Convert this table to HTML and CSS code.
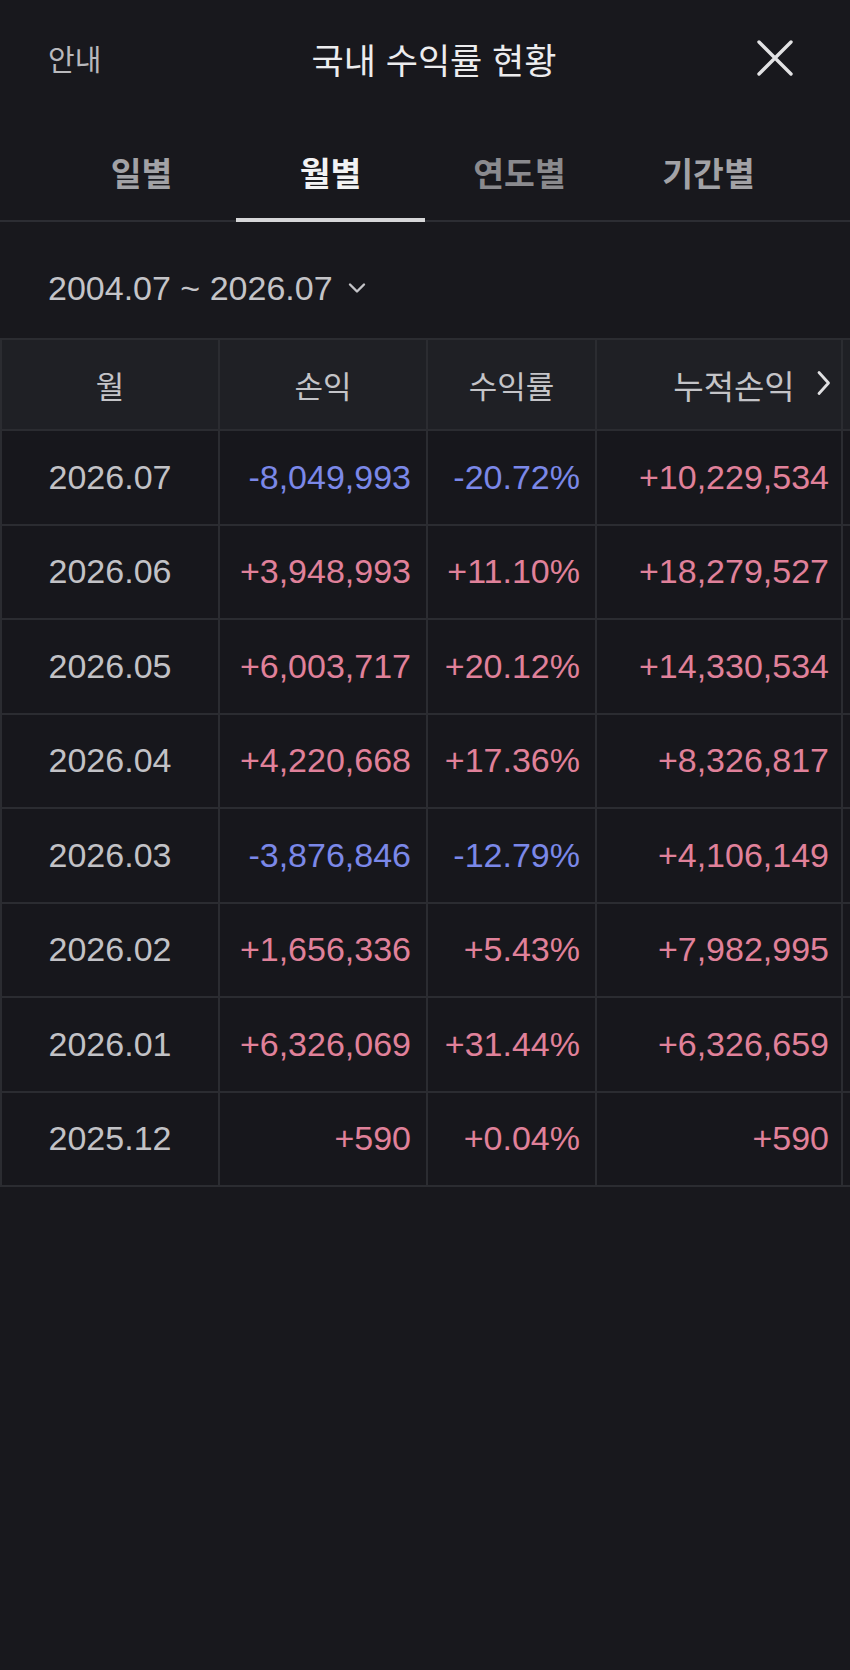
FILE: index.html
```html
<!DOCTYPE html>
<html lang="ko">
	<head>
		<meta charset="utf-8" />
		<title>국내 수익률 현황</title>
		<link rel="stylesheet" href="styles.css">
	</head>

	<body>
		<div class="top">
			<span class="guide">안내</span>
			<h1 class="title">국내 수익률 현황</h1>
			<span class="close">
				<svg width="38" height="38" viewBox="0 0 38 38"><path d="M3 3 L35 35 M35 3 L3 35" stroke="#e2e2e4" stroke-width="3.4" stroke-linecap="round" fill="none" /></svg>
			</span>
		</div>

		<div class="tabs">
			<span class="tab">일별</span>
			<span class="tab on">월별</span>
			<span class="tab dim">연도별</span>
			<span class="tab">기간별</span>
		</div>

		<div class="range">
			2004.07 ~ 2026.07
			<svg width="18" height="12" viewBox="0 0 18 12"><path d="M2 2.5 L9 9.5 L16 2.5" stroke="#c4c4c8" stroke-width="2.4" fill="none" stroke-linecap="round" stroke-linejoin="round" /></svg>
		</div>

		<div class="grid">
			<table>
				<colgroup>
					<col class="c1" /><col class="c2" /><col class="c3" /><col class="c4" /><col class="c5" />
				</colgroup>
				<thead>
					<tr>
						<th>월</th>
						<th>손익</th>
						<th>수익률</th>
						<th class="sum">누적손익</th>
						<th></th>
					</tr>
				</thead>
				<tbody>
					<tr><td>2026.07</td><td class="dn">-8,049,993</td><td class="dn">-20.72%</td><td class="up">+10,229,534</td><td></td></tr>
					<tr><td>2026.06</td><td class="up">+3,948,993</td><td class="up">+11.10%</td><td class="up">+18,279,527</td><td></td></tr>
					<tr><td>2026.05</td><td class="up">+6,003,717</td><td class="up">+20.12%</td><td class="up">+14,330,534</td><td></td></tr>
					<tr><td>2026.04</td><td class="up">+4,220,668</td><td class="up">+17.36%</td><td class="up">+8,326,817</td><td></td></tr>
					<tr><td>2026.03</td><td class="dn">-3,876,846</td><td class="dn">-12.79%</td><td class="up">+4,106,149</td><td></td></tr>
					<tr><td>2026.02</td><td class="up">+1,656,336</td><td class="up">+5.43%</td><td class="up">+7,982,995</td><td></td></tr>
					<tr><td>2026.01</td><td class="up">+6,326,069</td><td class="up">+31.44%</td><td class="up">+6,326,659</td><td></td></tr>
					<tr><td>2025.12</td><td class="up">+590</td><td class="up">+0.04%</td><td class="up">+590</td><td></td></tr>
				</tbody>
			</table>
			<svg class="more" width="16" height="26" viewBox="0 0 16 26"><path d="M3 2.5 L12.5 13 L3 23.5" stroke="#e0e0e2" stroke-width="2.8" fill="none" stroke-linecap="round" stroke-linejoin="round" /></svg>
		</div>
	</body>
</html>
```

FILE: styles.css
```css
html,
body {
	margin: 0;
	padding: 0;
	background: #18181d;
	color: #c9c9cc;
	font-family: "Liberation Sans", "Noto Sans CJK KR", sans-serif;
}
.top {
	height: 116px;
	padding: 0 56px 0 48px;
	display: grid;
	grid-template-columns: 1fr auto 1fr;
	align-items: center;
}
.guide {
	font-size: 29px;
	color: #b9b9bd;
}
.title {
	margin: 0 0 0 26px;
	font-size: 35px;
	font-weight: normal;
	color: #ececee;
}
.close {
	justify-self: end;
	display: flex;
}
.tabs {
	height: 104px;
	padding: 0 47px;
	display: flex;
	border-bottom: 2px solid #2c2d33;
}
.tab {
	flex: 1;
	display: flex;
	align-items: center;
	justify-content: center;
	padding-top: 6px;
	font-size: 33.5px;
	font-weight: bold;
	color: #a2a2a6;
	position: relative;
}
.tab.dim {
	color: #8a8a8e;
}
.tab.on {
	color: #f2f2f4;
}
.tab.on::after {
	content: "";
	position: absolute;
	left: 0;
	right: 0;
	bottom: -2px;
	height: 4px;
	background: #d6d6d8;
}
.range {
	height: 100px;
	padding: 16px 0 0 48px;
	display: flex;
	align-items: center;
	gap: 15px;
	font-size: 34px;
	color: #c4c4c8;
}
.grid {
	position: relative;
	overflow: hidden;
}
table {
	width: 901px;
	table-layout: fixed;
	border-collapse: collapse;
	border-left: 2px solid #2b2c31;
}
.c1 { width: 218px; }
.c2 { width: 208px; }
.c3 { width: 169px; }
.c4 { width: 246px; }
.c5 { width: 60px; }
th,
td {
	border: 2px solid #2b2c31;
	padding: 0;
}
th {
	height: 89px;
	background: #1f2025;
	font-size: 31px;
	font-weight: normal;
	color: #c4c4c8;
	text-align: center;
}
th.sum {
	padding-left: 30px;
	font-size: 33px;
}
td {
	height: 92.5px;
	background: #17171c;
	font-size: 34px;
	text-align: right;
	padding-right: 15px;
}
td:first-child {
	text-align: center;
	padding-right: 0;
	color: #c2c2c6;
}
td:nth-child(4) {
	padding-right: 12px;
}
td.up {
	color: #e0819a;
}
td.dn {
	color: #7b88e8;
}
.more {
	position: absolute;
	left: 816px;
	top: 32px;
}
```
